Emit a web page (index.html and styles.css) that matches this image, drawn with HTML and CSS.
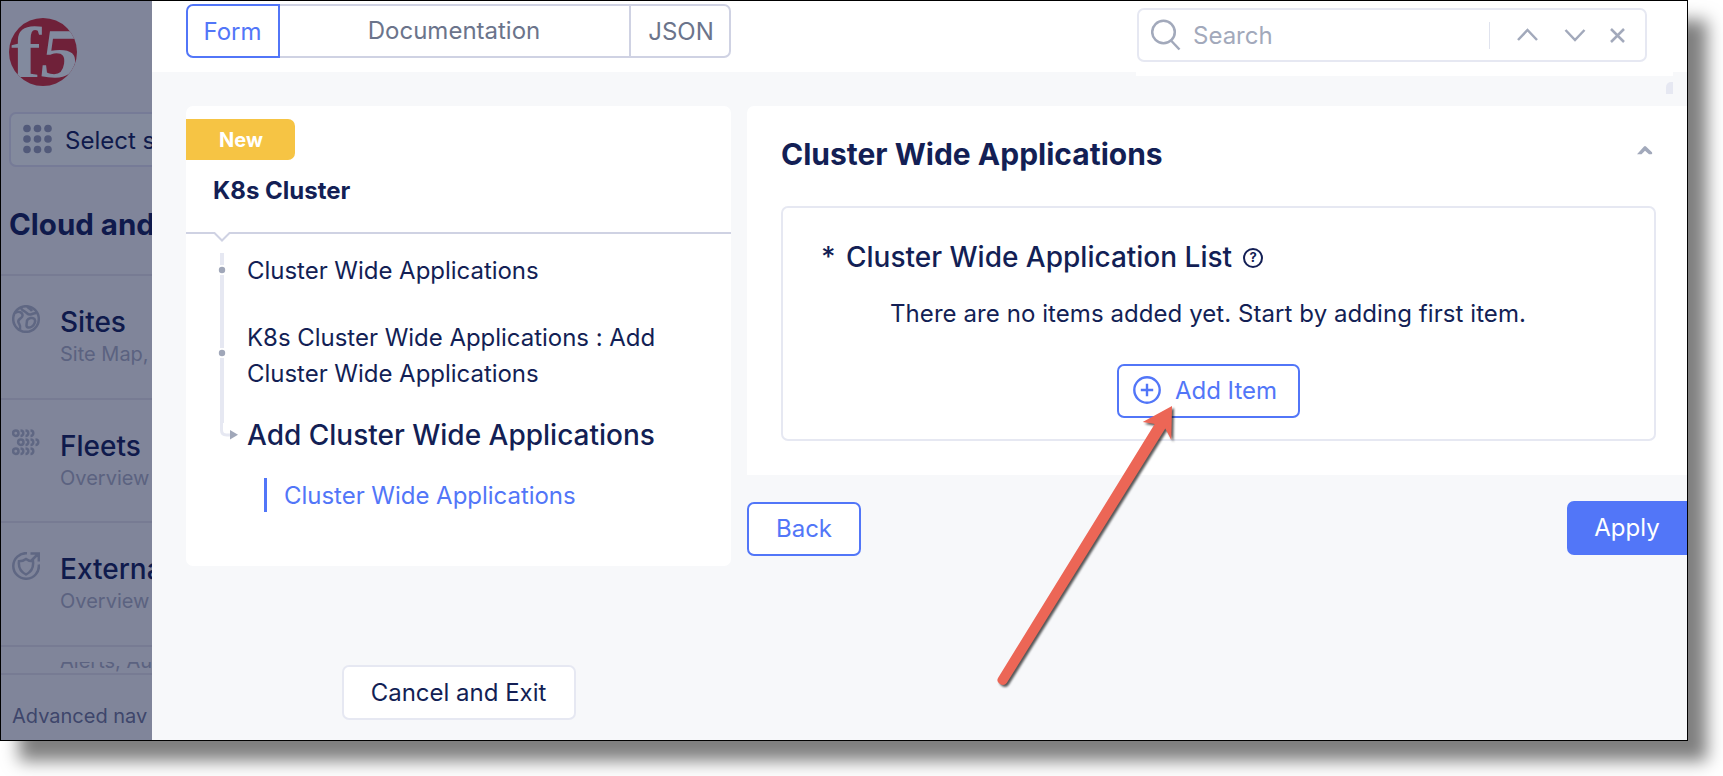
FILE: index.html
```html
<!DOCTYPE html>
<html lang="en">
<head>
<meta charset="utf-8">
<title>K8s Cluster</title>
<link rel="stylesheet" href="styles.css">
</head>
<body>
<div class="window">
  <aside class="sidebar">
    <svg class="logo" width="68" height="68" viewBox="0 0 68 68">
      <defs><clipPath id="disc"><circle cx="34" cy="34" r="34"/></clipPath></defs>
      <circle cx="34" cy="34" r="34" fill="#6f2139"/>
      <g clip-path="url(#disc)" class="logo-text">
        <text transform="translate(2 59) scale(1.250 1)" font-size="72">f</text>
        <text transform="translate(29 58.500) skewX(-8) scale(1.080 1)" font-size="70">5</text>
      </g>
    </svg>
    <div class="selector">
      <svg width="30" height="30" viewBox="0 0 30 30" fill="#525a7a">
        <circle cx="5" cy="4.500" r="3.800"/><circle cx="15.500" cy="4.500" r="3.800"/><circle cx="26" cy="4.500" r="3.800"/>
        <circle cx="5" cy="15" r="3.800"/><circle cx="15.500" cy="15" r="3.800"/><circle cx="26" cy="15" r="3.800"/>
        <circle cx="5" cy="25.500" r="3.800"/><circle cx="15.500" cy="25.500" r="3.800"/><circle cx="26" cy="25.500" r="3.800"/>
      </svg>
      <span>Select s</span>
    </div>
    <h2 class="side-title">Cloud and</h2>
    <nav class="side-nav">
      <a class="side-item">
        <svg width="28" height="28" viewBox="0 0 28 28" class="side-icon">
          <circle cx="14" cy="14" r="12.800"/>
          <path d="M3 8c2-1.500 5-1.500 6.500 0s1.500 3.500-.5 5-3.500 2-2.500 4.500 2.500 3 1.500 7M8.500 2.500c1.500 3 3 3.500 5 4.500 1.500 1 2.500 3 5 2.500s3-1.500 6-1.500M15.500 1.500c1.500 2.500 3 2 4.500 4.500M15 15.500c1-2.500 6-3.500 7.500-1.500s0 6-2.500 7.500-5.500 1.500-5.500-1 .5-3.500.5-5z"/>
        </svg>
        <span class="side-text"><b>Sites</b><small>Site Map,</small></span>
      </a>
      <a class="side-item">
        <svg width="28" height="28" viewBox="0 0 28 28" class="side-icon">
          <g id="chain"><circle cx="3.800" cy="4.200" r="2.700"/><path d="M8.500 1.500c3.700 0 3.700 5.400 0 5.400M13.500 1.500c3.700 0 3.700 5.400 0 5.400M18.500 1.500c3.700 0 3.700 5.400 0 5.400"/></g>
          <use href="#chain" x="5" y="9"/><use href="#chain" y="18"/>
        </svg>
        <span class="side-text"><b>Fleets</b><small>Overview</small></span>
      </a>
      <a class="side-item">
        <svg width="28" height="28" viewBox="0 0 28 28" class="side-icon">
          <path d="M15 1.200A12.800 12.800 0 1 0 26.800 12.500M14 7q3 2.300 7 2.300c.8 6.500-2 10.700-7 13.200-5-2.500-7.800-6.700-7-13.200q4 0 7-2.300zM19.500 8.500l7-7M18.500 1.500h8.300v8"/>
        </svg>
        <span class="side-text"><b>External</b><small>Overview</small></span>
      </a>
    </nav>
    <div class="side-cut"><small>Alerts, Au</small></div>
    <div class="side-foot">Advanced nav</div>
  </aside>

  <main class="main">
    <header class="topbar">
      <div class="tabs">
        <span class="tab tab-active">Form</span>
        <span class="tab tab-doc">Documentation</span>
        <span class="tab tab-json">JSON</span>
      </div>
      <div class="search-wrap">
        <div class="search">
          <svg class="search-icon" width="30" height="32" viewBox="0 0 30 32"><circle cx="12.500" cy="13" r="11.300"/><path d="M19.500 21l9 9.500"/></svg>
          <span class="search-text">Search</span>
          <span class="search-sep"></span>
          <svg class="search-ctl" width="110" height="16" viewBox="0 0 110 16"><path d="M1 13l9.500-10 9.500 10M48.500 3l9.500 10 9.500-10M94 2l13 13M107 2l-13 13"/></svg>
        </div>
        <i class="scroll-stub"></i>
      </div>
    </header>

    <div class="columns">
      <section class="outline">
        <div class="outline-head">
          <span class="badge">New</span>
          <h3>K8s Cluster</h3>
        </div>
        <div class="outline-body">
          <svg class="tree" width="41" height="212" viewBox="0 0 41 212">
            <path class="notch" d="M7.500 0L16 8.500 24.500 0"/>
            <path class="rail" d="M16 21v12M16 43v73M16 126v65"/>
            <path class="bend" d="M15.500 190v8q0 5 5 5h4"/>
            <circle cx="16" cy="38" r="3.200"/><circle cx="16" cy="121" r="3.200"/>
            <path class="tip" d="M24 198l8 4.700-8 4.700z"/>
          </svg>
          <div class="steps">
            <p>Cluster Wide Applications</p>
            <p class="step-two">K8s Cluster Wide Applications : Add<br>Cluster Wide Applications</p>
            <h4>Add Cluster Wide Applications</h4>
            <p class="current">Cluster Wide Applications</p>
          </div>
        </div>
      </section>

      <section class="content">
        <div class="card">
          <div class="card-head">
            <h2>Cluster Wide Applications</h2>
            <svg width="16" height="10" viewBox="0 0 16 10"><path d="M0 9.300L7 1.600q1-1 2 0L15 7.300q.8 1.500-.5 2H12L8 5.700 4.500 9.300z" fill="#a2a9bb"/></svg>
          </div>
          <div class="fieldset">
            <div class="label"><span class="star">*</span><span>Cluster Wide Application List</span>
              <span class="help">?</span>
            </div>
            <p class="message">There are no items added yet. Start by adding first item.</p>
            <span class="btn btn-add">
              <svg width="28" height="28" viewBox="0 0 28 28"><circle cx="14" cy="14" r="12.700"/><path d="M14 7.800v12.400M7.800 14h12.400"/></svg>
              Add Item
            </span>
          </div>
        </div>
        <div class="actions">
          <span class="btn btn-back">Back</span>
          <span class="btn btn-apply">Apply</span>
        </div>
      </section>
    </div>
    <span class="btn btn-cancel">Cancel and Exit</span>
  </main>
</div>
<svg class="arrow" width="200" height="300" viewBox="0 0 200 300">
  <path d="M182 16L152.700 32l12 2L8 288q-2 3.500 2 6t6.700-1L175.300 38.500l6 11.500z"/>
</svg>
</body>
</html>
```

FILE: styles.css
```css
* { box-sizing: border-box; }
html, body { margin: 0; background: #fff; overflow: hidden; }
body {
  width: 1723px;
  height: 776px;
  font-family: Inter, "Liberation Sans", sans-serif;
  font-size: 24px;
  color: #131f55;
}
h2, h3, h4, p { margin: 0; font-weight: 400; font-size: inherit; }

.window {
  width: 1688px;
  height: 741px;
  border: 1px solid #000;
  display: flex;
  overflow: hidden;
  background: #f7f8fa;
  box-shadow: 19px 20px 16px rgba(0, 0, 0, .5);
}

/* Dimmed navigation */
.sidebar {
  width: 151px;
  flex: none;
  overflow: hidden;
  white-space: nowrap;
  background: #80859a;
  color: #0f1a4c;
  display: flex;
  flex-direction: column;
}
.logo { flex: none; margin: 17px 0 0 8px; display: block; }
.logo-text { font-family: "Liberation Serif", serif; font-weight: 700; fill: #828a9e; }
.selector {
  flex: none;
  width: 260px;
  height: 55px;
  margin: 26px 0 0 8px;
  padding: 1px 11px 0;
  border: 2px solid #767b97;
  border-radius: 7px;
  background: #838a9d;
  display: flex;
  align-items: center;
  gap: 13px;
}
.selector svg { margin-top: -2px; }
.side-title {
  flex: none;
  margin: 37px 0 0 8px;
  font-size: 29.500px;
  font-weight: 700;
  line-height: 40px;
  padding-bottom: 30px;
}
.side-item {
  height: 123.500px;
  border-top: 2px solid #777b93;
  padding: 29px 0 0 11px;
  display: flex;
  gap: 20px;
}
.side-icon { flex: none; fill: none; stroke: #5f6783; stroke-width: 2.500; }
.side-text { display: flex; flex-direction: column; }
.side-text b { font-size: 28px; font-weight: 500; line-height: 34px; }
small { font-size: 20px; line-height: 30px; color: #5b6280; font-weight: 400; }
.side-cut {
  flex: none;
  height: 28px;
  border-top: 2px solid #777b93;
  padding: 15px 0 0 59px;
}
.side-cut small {
  display: flex;
  align-items: flex-end;
  height: 10px;
  overflow: hidden;
  line-height: 22px;
}
.side-foot {
  flex: 1;
  border-top: 2px solid #777b93;
  padding: 26px 0 0 11px;
  font-size: 20px;
  line-height: 30px;
  color: #3e466b;
}

/* Main pane */
.main { flex: 1; min-width: 0; display: flex; flex-direction: column; align-items: flex-start; }
.topbar {
  width: 100%;
  height: 71px;
  flex: none;
  background: #fff;
  display: flex;
  justify-content: space-between;
  padding: 3px 0 0 34px;
}
.tabs { display: flex; height: 54px; color: #6b748b; line-height: 52px; }
.tab {
  border: 2px solid #cfd2e3;
  border-left: 0;
  text-align: center;
}
.tab-active {
  width: 94px;
  border: 2px solid #5276f8;
  border-radius: 7px 0 0 7px;
  color: #5276f8;
  padding-right: 1px;
}
.tab-doc { width: 351px; line-height: 50px; padding-right: 1px; }
.tab-json { width: 100px; border-radius: 0 7px 7px 0; padding-left: 2px; }
.search-wrap { position: relative; width: 537px; height: 72px; margin-right: 14px; background: #fff; padding: 4px 0 0 1px; }
.search {
  width: 510px;
  height: 54px;
  border: 2px solid #e6e8f2;
  border-radius: 7px;
  display: flex;
  align-items: center;
  color: #a2a9bb;
}
.search svg { fill: none; stroke: #a2a9bb; stroke-width: 2.500; }
.search-icon { margin-left: 12px; }
.search-text { margin-left: 12px; width: 296px; line-height: 48px; padding-top: 2px; }
.search-sep { width: 1px; height: 27px; background: #e0e3ee; }
.search-ctl { margin-left: 27px; }
.scroll-stub {
  position: absolute;
  right: 0;
  top: 78px;
  width: 7px;
  height: 12px;
  border-radius: 5px 0 0 0;
  background: #e6e8f2;
}

.columns { display: flex; gap: 16px; padding: 34px 0 0 34px; width: 100%; }
.outline { width: 545px; height: 460px; flex: none; background: #fff; border-radius: 7px; }
.outline-head { height: 128px; padding-top: 13px; border-bottom: 2px solid #cfd2e3; }
.badge {
  display: block;
  width: 109px;
  height: 41px;
  padding-left: 33px;
  border-radius: 0 7px 7px 0;
  background: #f6c444;
  color: #fff;
  font-size: 20px;
  font-weight: 700;
  line-height: 42px;
}
.outline-head h3 { padding-left: 27px; margin-top: 10px; font-weight: 700; line-height: 42px; }
.outline-body { display: flex; padding-left: 20px; margin-top: -2px; }
.tree { flex: none; fill: #a0a7b9; }
.tree path { fill: none; stroke: #e6e8f2; stroke-width: 4; }
.tree .notch { fill: #fff; stroke: #cfd2e3; stroke-width: 2; }
.tree .bend { stroke-width: 3; }
.tree .tip { fill: #a0a7b9; stroke: none; }
.steps { padding-top: 21px; line-height: 36px; white-space: nowrap; }
.steps p { letter-spacing: -.03px; }
.steps .step-two { margin-top: 31px; }
.steps h4 { margin-top: 25px; font-size: 28px; font-weight: 500; }
.steps .current {
  margin: 25px 0 0 17px;
  padding: 1px 0 0 17px;
  border-left: 3px solid #5276f8;
  line-height: 33px;
  color: #5276f8;
}

.content { flex: 1; min-width: 0; }
.card { height: 369px; background: #fff; border-radius: 7px 0 0 0; padding: 0 31px 0 34px; }
.card-head { height: 100px; display: flex; align-items: center; justify-content: space-between; padding: 0 3px 4px 0; }
.card-head h2 { font-size: 30px; font-weight: 700; }
.card-head svg { margin-top: -8px; }
.fieldset {
  height: 235px;
  border: 2px solid #e6e8f2;
  border-radius: 7px;
  display: flex;
  flex-direction: column;
  align-items: center;
  white-space: nowrap;
}
.label {
  align-self: flex-start;
  display: flex;
  align-items: center;
  margin: 30px 0 0 38px;
  font-size: 28px;
  font-weight: 500;
  line-height: 38px;
}
.star { width: 25px; }
.help {
  width: 20px;
  height: 20px;
  margin: 2px 0 0 11px;
  border: 2.500px solid #131f55;
  border-radius: 50%;
  font-size: 13px;
  font-weight: 700;
  line-height: 15px;
  text-align: center;
}
.message { margin-top: 20px; line-height: 36px; padding-right: 21px; letter-spacing: .07px; }
.btn {
  display: flex;
  align-items: center;
  justify-content: center;
  height: 54px;
  border: 2px solid #5276f8;
  border-radius: 7px;
  background: #fff;
  color: #5276f8;
  padding-bottom: 2px;
}
.btn-add { width: 183px; margin: 32px 21px 0 0; gap: 14px; padding-right: 6px; }
.btn svg { fill: none; stroke: #5276f8; stroke-width: 2.400; }
.actions { display: flex; justify-content: space-between; padding-top: 27px; }
.btn-back { width: 114px; }
.btn-apply {
  width: 120px;
  margin-top: -1px;
  background: #5276f8;
  color: #fff;
  border-radius: 7px 0 0 7px;
}
.btn-cancel { width: 234px; height: 55px; margin: 99px 0 0 190px; padding: 0 1px 0 0; border-color: #e6e8f2; color: #131f55; }

/* Pointer annotation over the page */
.arrow {
  position: absolute;
  left: 990px;
  top: 390px;
  fill: #ec6656;
  filter: drop-shadow(2.500px 2.500px 1px rgba(0, 0, 0, .65));
}
```
